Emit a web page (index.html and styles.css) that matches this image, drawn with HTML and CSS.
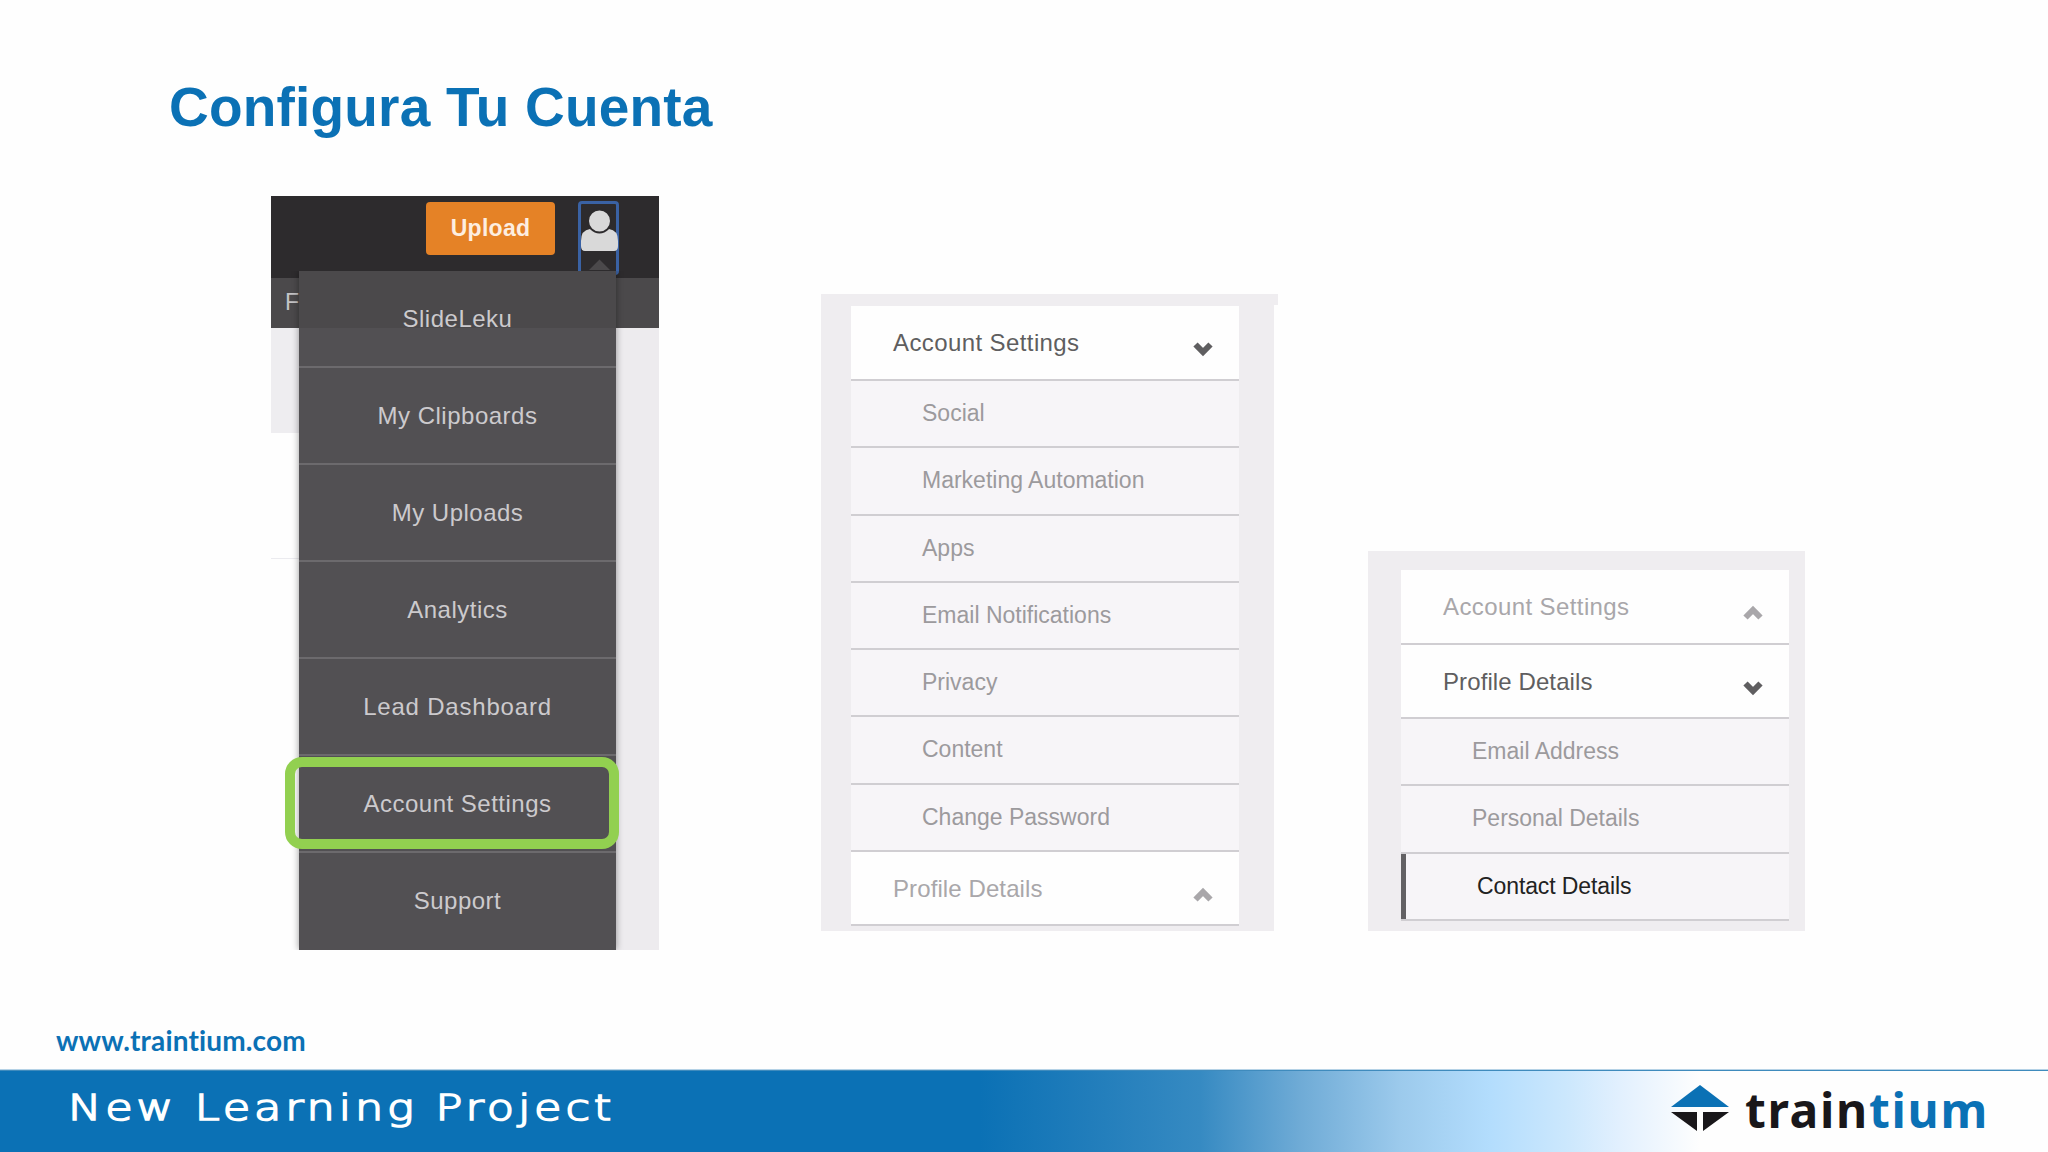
FILE: index.html
```html
<!DOCTYPE html>
<html lang="es">
<head>
  <meta charset="UTF-8" />
  <meta name="viewport" content="width=device-width, initial-scale=1.0"/>
  <title>Configura Tu Cuenta</title>
  <link rel="stylesheet" href="styles.css">
</head>
<body>
  <div class="slide">
    <h1>Configura Tu Cuenta</h1>

    <main class="panels">
      <section class="user-panel">
        <div class="topbar">
          <button class="upload">Upload</button>
          <div class="user">
            <svg width="39" height="70" viewBox="0 0 39 70">
              <path d="M1 45 V37 Q1 26 10 25 H29 Q38 26 38 37 V42 Q38 47 34 47 H5 Q1 47 1 42 Z" fill="#d9d9d9"/>
              <circle cx="19.5" cy="17" r="11.5" fill="#d9d9d9" stroke="#2d2b2d" stroke-width="2"/>
              <path d="M9 66 L19.5 55.5 L30 66 Z" fill="#4b494b"/>
            </svg>
          </div>
        </div>
        <div class="subbar">F</div>
        <div class="page-bg">
          <div class="bg-left"><div class="bg-block"></div><div class="bg-line"></div></div>
          <div class="bg-right"></div>
        </div>
        <ul class="user-menu">
          <li>SlideLeku</li>
          <li>My Clipboards</li>
          <li>My Uploads</li>
          <li>Analytics</li>
          <li class="wide">Lead Dashboard</li>
          <li>Account Settings</li>
          <li>Support</li>
        </ul>
        <div class="highlight"></div>
      </section>

      <section class="settings settings-account">
        <div class="strip"></div>
        <div class="head active">Account Settings
          <svg class="chevron" width="20" height="16" viewBox="0 0 20 16"><path d="M2.5 3.5 L10 11 L17.5 3.5"/></svg>
        </div>
        <div class="item">Social</div>
        <div class="item">Marketing Automation</div>
        <div class="item">Apps</div>
        <div class="item">Email Notifications</div>
        <div class="item">Privacy</div>
        <div class="item">Content</div>
        <div class="item">Change Password</div>
        <div class="head profile">Profile Details
          <svg class="chevron" width="20" height="16" viewBox="0 0 20 16"><path d="M2.5 12.5 L10 5 L17.5 12.5"/></svg>
        </div>
      </section>

      <section class="settings settings-profile">
        <div class="head">Account Settings
          <svg class="chevron" width="20" height="16" viewBox="0 0 20 16"><path d="M2.5 12.5 L10 5 L17.5 12.5"/></svg>
        </div>
        <div class="head profile active">Profile Details
          <svg class="chevron" width="20" height="16" viewBox="0 0 20 16"><path d="M2.5 3.5 L10 11 L17.5 3.5"/></svg>
        </div>
        <div class="item">Email Address</div>
        <div class="item">Personal Details</div>
        <div class="item current">Contact Details</div>
      </section>
    </main>

    <div class="site"><span>www.traintium.com</span></div>

    <footer>
      <div class="project">New Learning Project</div>
      <div class="logo">
        <svg width="58" height="47" viewBox="0 0 58 47">
          <path d="M29 0 L58 22 H0 Z" fill="#0b71b5"/>
          <path d="M0 27 H26 V46 Z M32 27 H58 L32 46 Z" fill="#19171a"/>
        </svg>
        <span class="brand">train<b>tium</b></span>
      </div>
    </footer>
  </div>
</body>
</html>
```

FILE: styles.css
```css
:root {
  --blue: #0b71b5;
  --panel: #efedf0;
  --line: #d0ced2;
  --dark: #2d2b2d;
}

* {
  box-sizing: border-box;
}

body {
  margin: 0;
  font-family: "Liberation Sans", Arial, sans-serif;
  background: #fefefe;
}

.slide {
  width: 2048px;
  height: 1152px;
  display: flex;
  flex-direction: column;
  overflow: hidden;
}

h1 {
  margin: 0;
  height: 196px;
  padding: 76px 0 0 169px;
  font-size: 55px;
  line-height: 63px;
  letter-spacing: 0.2px;
  color: var(--blue);
}

.panels {
  display: flex;
  align-items: flex-start;
  height: 754px;
  padding-left: 271px;
}

/* user dropdown */
.user-panel {
  position: relative;
  width: 388px;
  height: 754px;
}

.topbar {
  display: flex;
  align-items: flex-start;
  height: 82px;
  padding: 5px 0 0 155px;
  background: var(--dark);
}

.upload {
  width: 129px;
  height: 53px;
  margin-top: 1px;
  padding: 0;
  border: none;
  border-radius: 4px;
  background: #e58226;
  color: #fdeee0;
  font: bold 23px "Liberation Sans", Arial, sans-serif;
  letter-spacing: 0.3px;
}

.user {
  width: 41px;
  height: 74px;
  margin-left: 23px;
  border: 3px solid #3a62a4;
  border-radius: 4px;
}

.user svg {
  display: block;
  margin-left: -1px;
}

.subbar {
  height: 50px;
  padding: 12px 0 0 14px;
  background: #4b494b;
  color: #c4c3c5;
  font-size: 23px;
  line-height: 25px;
}

.page-bg {
  display: flex;
  justify-content: space-between;
  height: 622px;
}

.bg-left {
  width: 28px;
}

.bg-block {
  height: 105px;
  background: #eeedf0;
}

.bg-line {
  height: 126px;
  border-bottom: 1px solid #ebebef;
}

.bg-right {
  width: 44px;
  background: #edebee;
}

.user-menu {
  position: absolute;
  top: 75px;
  left: 28px;
  width: 317px;
  height: 679px;
  margin: 0;
  padding: 0;
  list-style: none;
  background: linear-gradient(#4b494b 57px, #525053 57px);
  box-shadow: 0 0 7px rgba(0, 0, 0, 0.4);
  clip-path: inset(0 -10px 0 -10px);
}

.user-menu li {
  height: 97.1px;
  border-bottom: 2px solid #6c6a6d;
  text-align: center;
  font-size: 24px;
  line-height: 95px;
  letter-spacing: 0.5px;
  color: #cccacd;
}

.user-menu li:first-child {
  height: 96.5px;
}

.user-menu li:last-child {
  border-bottom: none;
}

.user-menu .wide {
  letter-spacing: 0.8px;
}

.highlight {
  position: absolute;
  top: 561px;
  left: 14px;
  width: 334px;
  height: 92px;
  border: 10px solid #92d050;
  border-radius: 17px;
}

/* settings sidebars */
.settings {
  background: var(--panel);
}

.settings-account {
  position: relative;
  width: 453px;
  height: 637px;
  margin: 98px 0 0 162px;
  padding: 12px 35px 0 30px;
}

.strip {
  position: absolute;
  top: 0;
  right: -4px;
  width: 4px;
  height: 11px;
  background: var(--panel);
}

.settings-profile {
  width: 437px;
  height: 380px;
  margin: 355px 0 0 94px;
  padding: 19px 16px 0 33px;
}

.head {
  display: flex;
  justify-content: space-between;
  height: 74px;
  padding: 0 26px 0 42px;
  border-bottom: 2px solid var(--line);
  background: #fefefe;
  color: #a9a7aa;
  font-size: 24px;
  line-height: 74px;
  letter-spacing: 0.4px;
}

.head:not(.profile) {
  height: 75px;
}

.head.profile {
  letter-spacing: 0.1px;
}

.head.active {
  color: #5f5e60;
}

.chevron {
  margin-top: 35px;
  fill: none;
  stroke: currentColor;
  stroke-width: 6;
}

.item {
  height: 67.3px;
  padding-left: 71px;
  border-bottom: 2px solid var(--line);
  background: #f7f5f8;
  color: #9c9a9d;
  font-size: 23px;
  line-height: 64px;
}

.item.current {
  box-shadow: inset 5px 0 #636164;
  padding-left: 76px;
  letter-spacing: -0.1px;
  color: #222;
}

.site {
  height: 119px;
  padding: 72px 0 0 56px;
  color: var(--blue);
  font: bold 28px/36px Lato, sans-serif;
  font-variant-ligatures: none;
  letter-spacing: 0.15px;
}

footer {
  display: flex;
  justify-content: space-between;
  height: 83px;
  padding: 0 59px 0 68px;
  border-top: 1px solid #b5d2e6;
  box-shadow: inset 0 1px #3f8bbd;
  background: linear-gradient(to right, #0b71b5 980px, #217dbb 1090px, #368ac2 1200px, #6fabd6 1300px, #9ccaec 1400px, #b3ddfd 1490px, #cde8fd 1570px, #e2f0fe 1620px, #fefefe 1700px);
}

.project {
  padding-top: 16px;
  color: #fff;
  font: 200 35px/44px "DejaVu Sans", sans-serif;
  letter-spacing: 3px;
  white-space: nowrap;
  transform: scaleX(1.275);
  transform-origin: left;
  -webkit-text-stroke: 1.6px #fff;
}

.logo {
  display: flex;
}

.logo svg {
  margin: 15px 16px 0 0;
}

.brand {
  padding-top: 10px;
  color: #19171a;
  font: bold 48px/60px "Noto Sans", sans-serif;
  letter-spacing: 1.7px;
}

.brand b {
  font-weight: bold;
  color: var(--blue);
}
```
